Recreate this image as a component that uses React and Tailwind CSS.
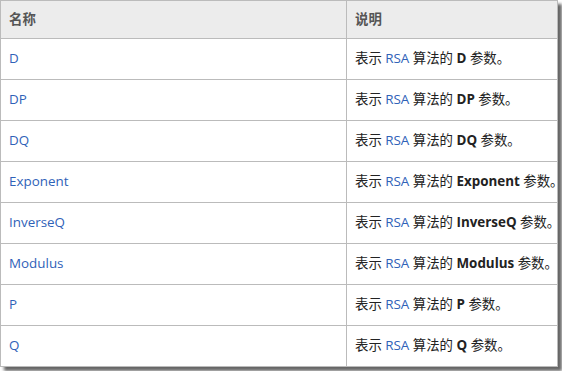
import React from "react";

const rows = ["D", "DP", "DQ", "Exponent", "InverseQ", "Modulus", "P", "Q"];

export default function App() {
  return (
    <div className="w-[562px] h-[371px] bg-white" style={{ fontFamily: '"Open Sans", "Noto Sans CJK SC", sans-serif' }}>
      <div className="w-[558px] shadow-[4px_4px_3px_rgba(0,0,0,0.6)]">
        <table className="w-full table-fixed border-collapse text-[13.4px] text-[#222]">
          <thead>
            <tr className="h-[38px] bg-[#ececec]">
              <th className="w-[346px] border border-[#bbbbbb] pl-[8px] text-left font-semibold text-[#555]">名称</th>
              <th className="border border-[#bbbbbb] pl-[8px] text-left font-semibold text-[#555]">说明</th>
            </tr>
          </thead>
          <tbody>
            {rows.map((r) => (
              <tr key={r} className="h-[41px]">
                <td className="border border-[#bbbbbb] pl-[8px] pb-[2px] text-[#2f62b8]">{r}</td>
                <td className="whitespace-nowrap border border-[#bbbbbb] pl-[8px] pb-[2px]">
                  表示 <span className="text-[#2f62b8]">RSA</span> 算法的 <b className="font-bold">{r}</b> 参数。
                </td>
              </tr>
            ))}
          </tbody>
        </table>
      </div>
    </div>
  );
}
